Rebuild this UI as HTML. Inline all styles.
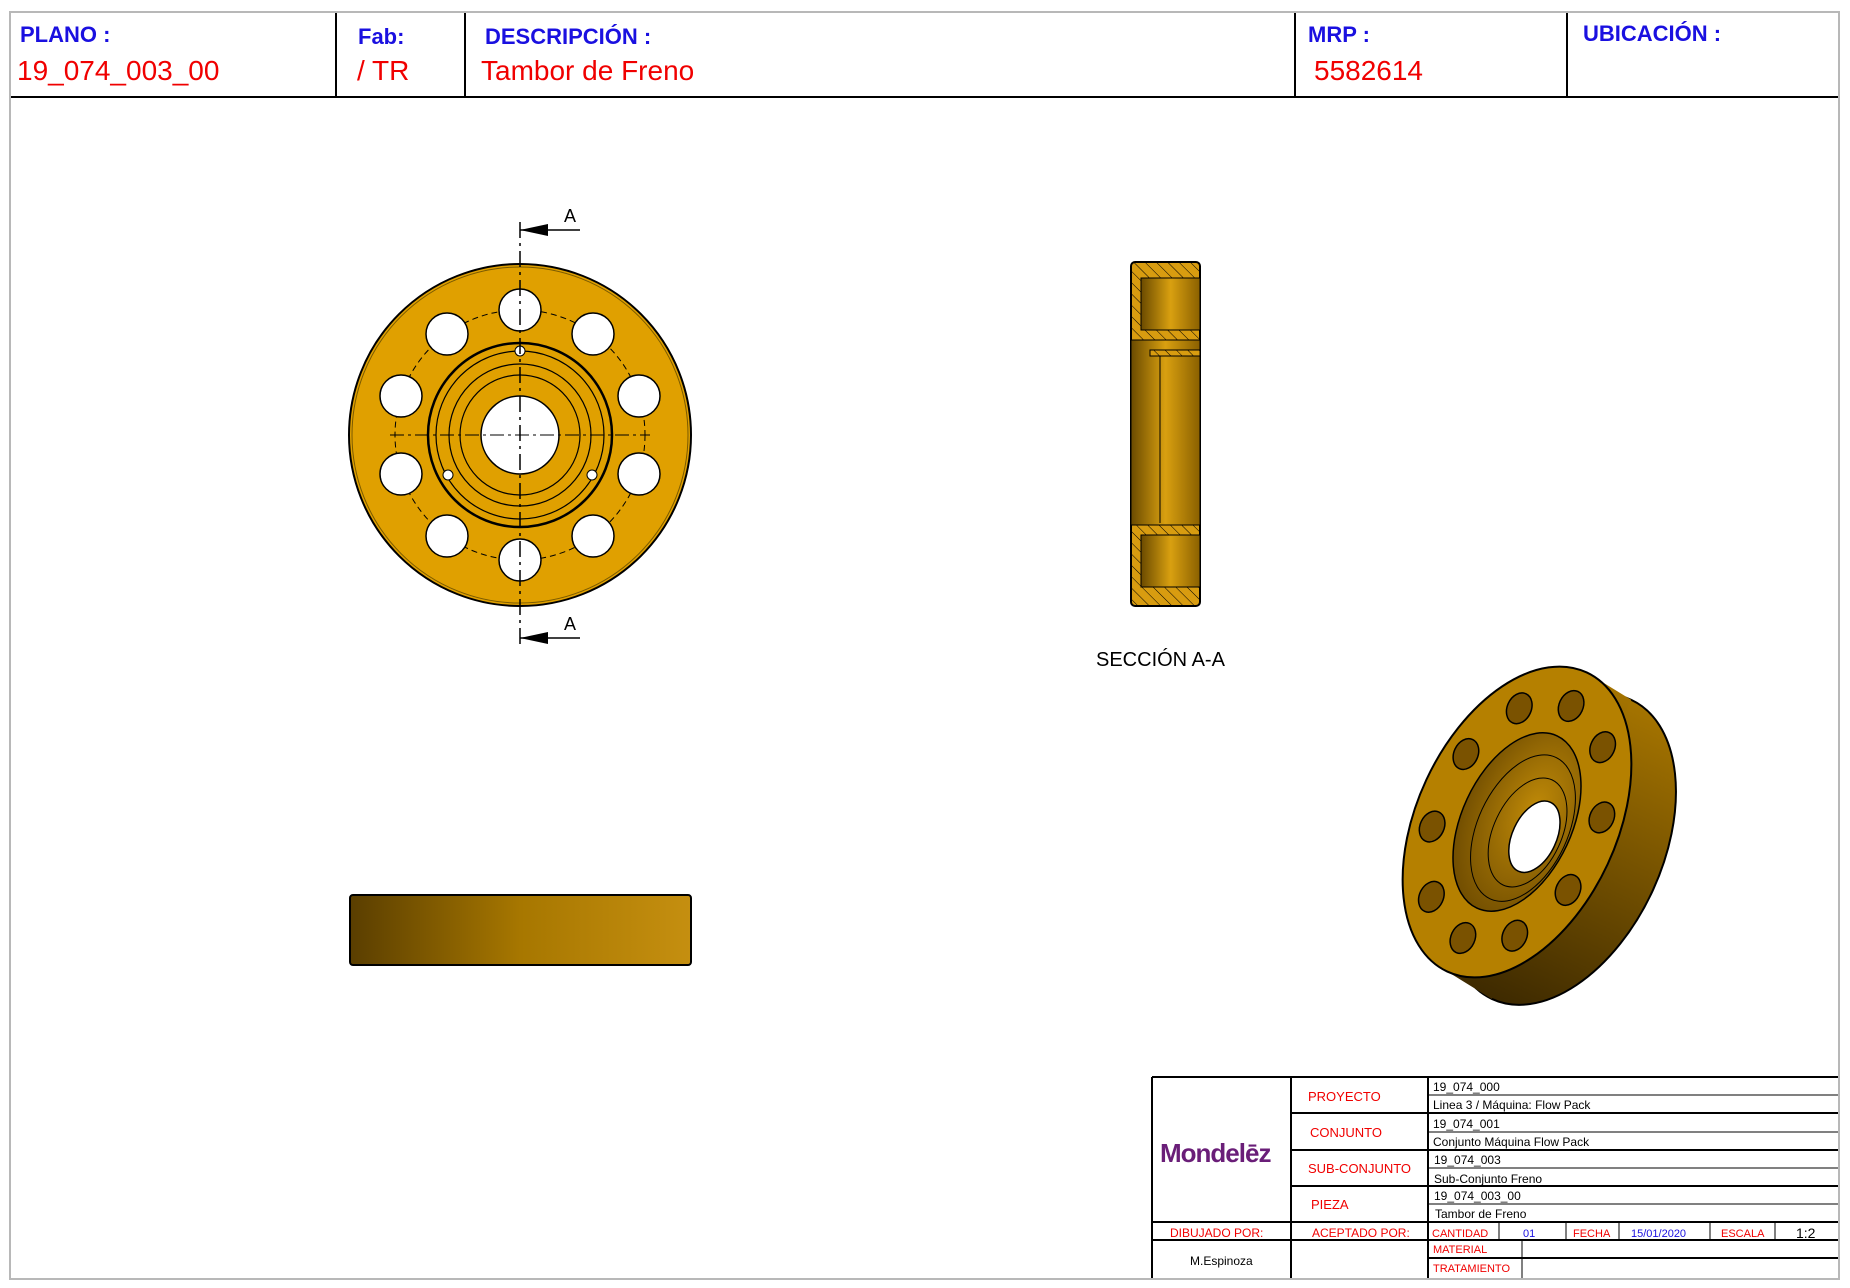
<!DOCTYPE html>
<html><head><meta charset="utf-8">
<style>
html,body{margin:0;padding:0;background:#fff;}
body{width:1850px;height:1288px;position:relative;overflow:hidden;font-family:"Liberation Sans",sans-serif;}
.abs{position:absolute;}
.lbl{color:#1a10e0;font-weight:bold;font-size:22px;}
.val{color:#f00000;font-size:28px;}
.t{position:absolute;font-size:12px;white-space:nowrap;}
.r{color:#f00000;}
.k{color:#000;}
.b{color:#1a10e0;}
</style></head><body>
<div class="abs" style="left:9px;top:11px;width:1827px;height:1265px;border:2px solid #b8b8b8;"></div>
<div class="abs" style="left:11px;top:96px;width:1827px;height:2px;background:#000;"></div>
<div class="abs" style="left:335px;top:13px;width:2px;height:84px;background:#000;"></div>
<div class="abs" style="left:464px;top:13px;width:2px;height:84px;background:#000;"></div>
<div class="abs" style="left:1294px;top:13px;width:2px;height:84px;background:#000;"></div>
<div class="abs" style="left:1566px;top:13px;width:2px;height:84px;background:#000;"></div>
<div class="abs lbl" style="left:20px;top:22px;">PLANO :</div>
<div class="abs val" style="left:17px;top:55px;">19_074_003_00</div>
<div class="abs lbl" style="left:358px;top:24px;">Fab:</div>
<div class="abs val" style="left:357px;top:55px;">/ TR</div>
<div class="abs lbl" style="left:485px;top:24px;">DESCRIPCIÓN :</div>
<div class="abs val" style="left:481px;top:55px;">Tambor de Freno</div>
<div class="abs lbl" style="left:1308px;top:22px;">MRP :</div>
<div class="abs val" style="left:1314px;top:55px;">5582614</div>
<div class="abs lbl" style="left:1583px;top:21px;">UBICACIÓN :</div>

<svg class="abs" style="left:0;top:0" width="1850" height="1288">
<defs>
<linearGradient id="side" x1="0" x2="1">
<stop offset="0" stop-color="#5a3e00"/><stop offset="0.5" stop-color="#a77700"/><stop offset="1" stop-color="#c58f10"/></linearGradient>
<linearGradient id="sec" x1="0" x2="1">
<stop offset="0" stop-color="#6a4a00"/><stop offset="0.5" stop-color="#d9a010"/><stop offset="1" stop-color="#8a6000"/></linearGradient>
<linearGradient id="back" x1="0" y1="0" x2="0" y2="1">
<stop offset="0" stop-color="#a57400"/><stop offset="1" stop-color="#3e2a00"/></linearGradient>
<radialGradient id="rec" cx="0.6" cy="0.4" r="0.7">
<stop offset="0" stop-color="#c08a08"/><stop offset="1" stop-color="#6a4800"/></radialGradient>
<pattern id="hatch" width="8" height="8" patternUnits="userSpaceOnUse" patternTransform="rotate(-45)">
<rect width="8" height="8" fill="#d89c10"/><line x1="0" y1="0" x2="0" y2="8" stroke="#000" stroke-width="1"/></pattern>
</defs>
<g transform="translate(520,435)">
<circle r="171" fill="#e0a000" stroke="#000" stroke-width="2"/>
<circle r="168" fill="none" stroke="#7a5a00" stroke-width="1"/>
<circle r="125" fill="none" stroke="#000" stroke-width="1" stroke-dasharray="6,4"/>
<g fill="#fff" stroke="#000" stroke-width="1.5">
<circle cx="0" cy="-125" r="21"/><circle cx="73" cy="-101" r="21"/><circle cx="119" cy="-39" r="21"/>
<circle cx="119" cy="39" r="21"/><circle cx="73" cy="101" r="21"/><circle cx="0" cy="125" r="21"/>
<circle cx="-73" cy="101" r="21"/><circle cx="-119" cy="39" r="21"/><circle cx="-119" cy="-39" r="21"/><circle cx="-73" cy="-101" r="21"/>
</g>
<circle r="92" fill="none" stroke="#000" stroke-width="2.5"/>
<circle r="84" fill="none" stroke="#000" stroke-width="1.2"/>
<circle r="71" fill="none" stroke="#000" stroke-width="1.2"/>
<circle r="60" fill="none" stroke="#000" stroke-width="1.2"/>
<circle r="39" fill="#fff" stroke="#000" stroke-width="1.5"/>
<circle cx="0" cy="-84" r="5" fill="#fff" stroke="#000"/>
<circle cx="-72" cy="40" r="5" fill="#fff" stroke="#000"/>
<circle cx="72" cy="40" r="5" fill="#fff" stroke="#000"/>
<line x1="-130" y1="0" x2="130" y2="0" stroke="#000" stroke-width="1" stroke-dasharray="14,4,3,4"/>
</g>
<line x1="520" y1="222" x2="520" y2="647" stroke="#000" stroke-width="1.5" stroke-dasharray="16,5,3,5"/>
<line x1="520" y1="230" x2="580" y2="230" stroke="#000" stroke-width="1.5"/>
<polygon points="520,230 548,224 548,236" fill="#000"/>
<line x1="520" y1="638" x2="580" y2="638" stroke="#000" stroke-width="1.5"/>
<polygon points="520,638 548,632 548,644" fill="#000"/>
<text x="564" y="222" font-size="18" font-family="Liberation Sans">A</text>
<text x="564" y="630" font-size="18" font-family="Liberation Sans">A</text>
<!-- section -->
<rect x="1131" y="262" width="69" height="344" rx="4" fill="url(#hatch)" stroke="#000" stroke-width="2"/>
<rect x="1141" y="278" width="59" height="52" fill="url(#sec)" stroke="#000"/>
<rect x="1141" y="535" width="59" height="52" fill="url(#sec)" stroke="#000"/>
<rect x="1131" y="340" width="69" height="185" fill="url(#sec)" stroke="#000"/>
<rect x="1150" y="350" width="50" height="6" fill="url(#hatch)" stroke="#000"/>
<line x1="1160" y1="356" x2="1160" y2="523" stroke="#000"/>
<text x="1096" y="666" font-size="20" font-family="Liberation Sans">SECCIÓN A-A</text>
<rect x="350" y="895" width="341" height="70" rx="3" fill="url(#side)" stroke="#000" stroke-width="2"/>
<!-- iso -->
<g transform="translate(1517,822) rotate(25)">
<ellipse cx="52" cy="6" rx="100" ry="165" fill="url(#back)" stroke="#000" stroke-width="2"/>
<polygon points="0,-165 52,-159 52,171 0,165" fill="url(#back)"/>
<ellipse cx="0" cy="0" rx="100" ry="165" fill="#b58000" stroke="#000" stroke-width="2"/>
<ellipse cx="0" cy="0" rx="55" ry="95" fill="url(#rec)" stroke="#000" stroke-width="1.5"/>
<ellipse cx="8" cy="3" rx="45" ry="78" fill="none" stroke="#000" stroke-width="1"/>
<ellipse cx="14" cy="5" rx="34" ry="58" fill="none" stroke="#000" stroke-width="1"/>
<ellipse cx="22" cy="6" rx="22" ry="38" fill="#fff" stroke="#000" stroke-width="1.5"/>
<g fill="#7a5200" stroke="#000" stroke-width="1.5">
<ellipse cx="0" cy="-128" rx="12" ry="16"/><ellipse cx="46" cy="-104" rx="12" ry="16"/><ellipse cx="75" cy="-40" rx="12" ry="16"/>
<ellipse cx="75" cy="40" rx="12" ry="16"/><ellipse cx="46" cy="104" rx="12" ry="16"/><ellipse cx="0" cy="128" rx="12" ry="16"/>
<ellipse cx="-46" cy="104" rx="12" ry="16"/><ellipse cx="-75" cy="40" rx="12" ry="16"/><ellipse cx="-75" cy="-40" rx="12" ry="16"/><ellipse cx="-46" cy="-104" rx="12" ry="16"/>
</g>
</g>
<g stroke="#000" stroke-width="2" fill="none">
<line x1="1152" y1="1077" x2="1838" y2="1077"/>
<line x1="1152" y1="1077" x2="1152" y2="1278"/>
<line x1="1291" y1="1077" x2="1291" y2="1278"/>
<line x1="1428" y1="1077" x2="1428" y2="1278"/>
<line x1="1291" y1="1113" x2="1838" y2="1113"/>
<line x1="1291" y1="1150" x2="1838" y2="1150"/>
<line x1="1291" y1="1186" x2="1838" y2="1186"/>
<line x1="1152" y1="1222" x2="1838" y2="1222"/>
<line x1="1152" y1="1240" x2="1838" y2="1240"/>
<line x1="1428" y1="1258" x2="1838" y2="1258"/>
</g>
<g stroke="#000" stroke-width="1">
<line x1="1428" y1="1095" x2="1838" y2="1095"/>
<line x1="1428" y1="1132" x2="1838" y2="1132"/>
<line x1="1428" y1="1168" x2="1838" y2="1168"/>
<line x1="1428" y1="1204" x2="1838" y2="1204"/>
<line x1="1499" y1="1222" x2="1499" y2="1240"/>
<line x1="1566" y1="1222" x2="1566" y2="1240"/>
<line x1="1619" y1="1222" x2="1619" y2="1240"/>
<line x1="1710" y1="1222" x2="1710" y2="1240"/>
<line x1="1775" y1="1222" x2="1775" y2="1240"/>
<line x1="1522" y1="1240" x2="1522" y2="1278"/>
</g>
</svg>
<div class="abs" style="left:1160px;top:1138px;font-size:26px;font-weight:bold;color:#6a1e78;letter-spacing:-1px;">Mondelēz</div>
<div class="t r" style="left:1308px;top:1089px;font-size:13px;">PROYECTO</div>
<div class="t r" style="left:1310px;top:1125px;font-size:13px;">CONJUNTO</div>
<div class="t r" style="left:1308px;top:1161px;font-size:13px;">SUB-CONJUNTO</div>
<div class="t r" style="left:1311px;top:1197px;font-size:13px;">PIEZA</div>
<div class="t k" style="left:1433px;top:1080px;">19_074_000</div>
<div class="t k" style="left:1433px;top:1098px;">Linea 3 / Máquina: Flow Pack</div>
<div class="t k" style="left:1433px;top:1117px;">19_074_001</div>
<div class="t k" style="left:1433px;top:1135px;">Conjunto Máquina Flow Pack</div>
<div class="t k" style="left:1434px;top:1153px;">19_074_003</div>
<div class="t k" style="left:1434px;top:1172px;">Sub-Conjunto Freno</div>
<div class="t k" style="left:1434px;top:1189px;">19_074_003_00</div>
<div class="t k" style="left:1435px;top:1207px;">Tambor de Freno</div>
<div class="t r" style="left:1170px;top:1226px;">DIBUJADO POR:</div>
<div class="t r" style="left:1312px;top:1226px;">ACEPTADO POR:</div>
<div class="t r" style="left:1432px;top:1228px;font-size:11px;">CANTIDAD</div>
<div class="t b" style="left:1523px;top:1228px;font-size:11px;">01</div>
<div class="t r" style="left:1573px;top:1228px;font-size:11px;">FECHA</div>
<div class="t b" style="left:1631px;top:1228px;font-size:11px;">15/01/2020</div>
<div class="t r" style="left:1721px;top:1228px;font-size:11px;">ESCALA</div>
<div class="t k" style="left:1796px;top:1225px;font-size:14px;">1:2</div>
<div class="t r" style="left:1433px;top:1244px;font-size:11px;">MATERIAL</div>
<div class="t r" style="left:1433px;top:1263px;font-size:11px;">TRATAMIENTO</div>
<div class="t k" style="left:1190px;top:1254px;">M.Espinoza</div>
</body></html>
